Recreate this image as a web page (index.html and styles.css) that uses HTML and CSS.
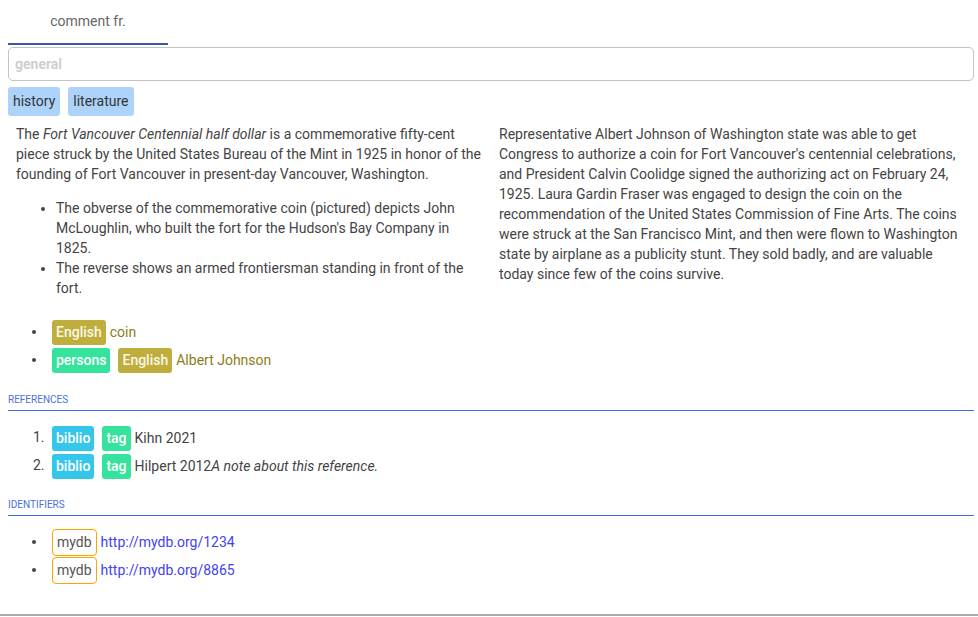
FILE: index.html
```html
<!DOCTYPE html>
<html>
<head>
<meta charset="utf-8">
<link rel="stylesheet" href="styles.css">
</head>
<body>
<div class="page">
  <div class="inner">
    <div class="tabs"><div class="tab active">comment fr.</div></div>
    <div class="input"><span class="placeholder">general</span></div>
    <div class="cats"><span class="cat">history</span><span class="cat">literature</span></div>
    <div class="cols">
      <div class="col">
        <p>The <em>Fort Vancouver Centennial half dollar</em> is a commemorative fifty-cent piece struck by the United States Bureau of the Mint in 1925 in honor of the founding of Fort Vancouver in present-day Vancouver, Washington.</p>
        <ul>
          <li>The obverse of the commemorative coin (pictured) depicts John McLoughlin, who built the fort for the Hudson's Bay Company in 1825.</li>
          <li>The reverse shows an armed frontiersman standing in front of the fort.</li>
        </ul>
      </div>
      <div class="col">
        <p>Representative Albert Johnson of Washington state was able to get Congress to authorize a coin for Fort Vancouver's centennial celebrations, and President Calvin Coolidge signed the authorizing act on February 24, 1925. Laura Gardin Fraser was engaged to design the coin on the recommendation of the United States Commission of Fine Arts. The coins were struck at the San Francisco Mint, and then were flown to Washington state by airplane as a publicity stunt. They sold badly, and are valuable today since few of the coins survive.</p>
      </div>
    </div>
    <ul class="chiplist tags">
      <li><span class="chip olive">English</span><span class="olive-text">coin</span></li>
      <li><span class="chip green">persons</span><span class="chip olive">English</span><span class="olive-text">Albert Johnson</span></li>
    </ul>
    <h4 class="section">References</h4>
    <ol class="chiplist refs">
      <li><span class="chip cyan">biblio</span><span class="chip green">tag</span><span>Kihn 2021</span></li>
      <li><span class="chip cyan">biblio</span><span class="chip green">tag</span><span>Hilpert 2012<em>A note about this reference.</em></span></li>
    </ol>
    <h4 class="section">Identifiers</h4>
    <ul class="chiplist ids">
      <li><span class="chip outline">mydb</span><a href="#">http://mydb.org/1234</a></li>
      <li><span class="chip outline">mydb</span><a href="#">http://mydb.org/8865</a></li>
    </ul>
  </div>
</div>
</body>
</html>
```

FILE: styles.css
```css
html, body {
  margin: 0;
  padding: 0;
  background: #fff;
}
body {
  font-family: Roboto, "Liberation Sans", sans-serif;
  font-size: 14px;
  line-height: 20px;
  color: #444;
}
.page {
  border-bottom: 2px solid #aaa;
  padding-bottom: 17px;
}
.inner {
  padding: 8px 4px 0 8px;
}
.tabs {
  display: flex;
}
.tab {
  width: 160px;
  text-align: center;
  color: #666;
  line-height: 16px;
  padding: 5px 0 14px;
}
.tab.active {
  border-bottom: 2px solid #3f51b5;
}
.input {
  margin-top: 2px;
  height: 32px;
  border: 1px solid #c4c4c4;
  border-radius: 5px;
  display: flex;
  align-items: center;
  padding-left: 6px;
}
.placeholder {
  font-weight: 700;
  color: #cfcfcf;
}
.cats {
  display: flex;
  gap: 8px;
  margin-top: 6px;
}
.cat {
  background: #aed3fb;
  color: #333;
  border-radius: 3px;
  padding: 6px 5px 6px 5px;
  line-height: 17px;
}
.cols {
  display: grid;
  grid-template-columns: 1fr 1fr;
}
.col {
  padding: 8px 8px 0;
}
.col p {
  margin: 0 0 14px;
}
.col ul {
  margin: 14px 0 14px;
  padding-left: 40px;
}
.chiplist {
  margin: 14px 0 14px;
  padding-left: 39px;
}
.chiplist li {
  height: 28px;
  line-height: 28px;
  padding-left: 1px;
}
.tags {
  margin-top: 5px;
  margin-bottom: 17px;
}
.refs {
  padding-left: 40px;
  margin-top: 12px;
  margin-bottom: 16px;
}
.refs li {
  padding-left: 0;
}
.ids {
  margin-top: 11px;
}
.chip {
  display: inline-block;
  line-height: 17px;
  padding: 4px 4px;
  margin: 0 4px;
  border-radius: 3px;
  color: #fff;
  font-weight: 500;
  vertical-align: middle;
}
.chiplist li > :not(.chip) {
  vertical-align: middle;
  line-height: 20px;
}
.olive { background: #bfae3e; color: #f8f6e4; }
.green { background: #35e39d; }
.cyan { background: #35c6ec; }
.outline {
  background: #fff;
  border: 1px solid #ffa500;
  color: #555;
  font-weight: 400;
  padding: 4px 4px;
  border-radius: 4px;
}
.olive-text { color: #8c7c18; }
.chiplist a {
  color: #4343ee;
  text-decoration: none;
}
.section {
  margin: 0;
  padding: 4px 0 4px;
  font-size: 10px;
  line-height: 12px;
  font-weight: 400;
  text-transform: uppercase;
  color: #4c70e0;
  border-bottom: 1px solid #4169e1;
}
```
